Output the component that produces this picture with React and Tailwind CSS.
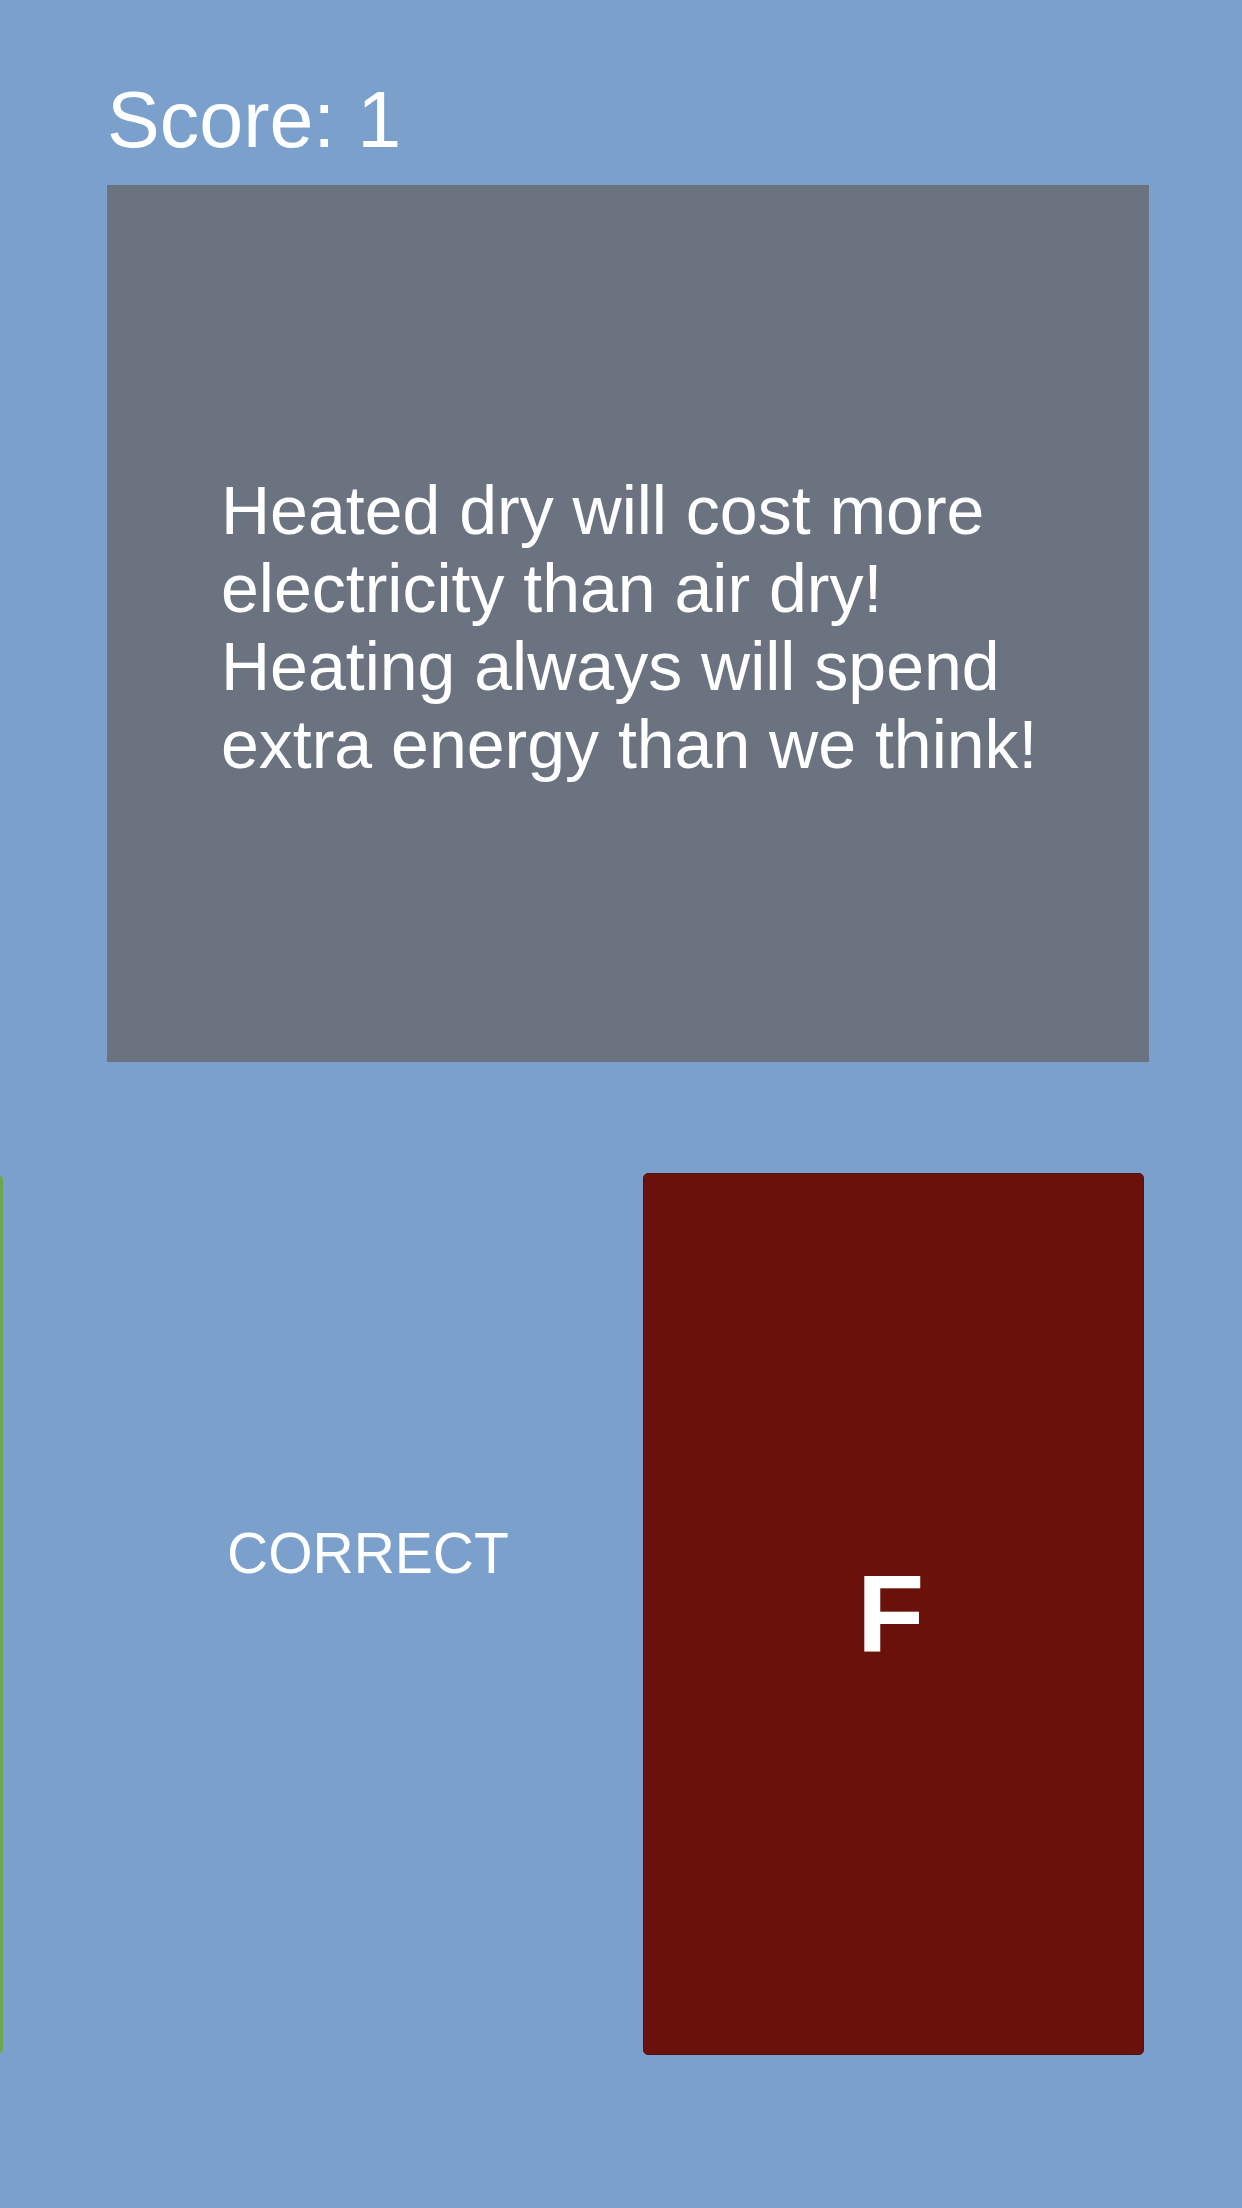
import React from 'react';

function Card({ className, children }) {
  return (
    <div className={`shrink-0 w-[501px] rounded-[5px] flex items-center justify-center ${className}`}>
      {children}
    </div>
  );
}

export default function App() {
  const score = 1;

  return (
    <div className="w-[1242px] h-[2208px] overflow-hidden bg-[#7ba0cc] text-white font-['Liberation_Sans',Arial,sans-serif]">
      <div className="pt-[80px] pl-[107px] text-[79px] leading-none">Score: {score}</div>

      <div className="ml-[107px] mt-[26px] w-[1042px] h-[877px] bg-[#6b7280] flex items-center pl-[114px]">
        <p className="text-[68px] leading-[78px] mb-[-6px]">
          Heated dry will cost more
          <br />
          electricity than air dry!
          <br />
          Heating always will spend
          <br />
          extra energy than we think!
        </p>
      </div>

      <div className="mt-[111px] h-[882px] flex items-start">
        <Card className="-ml-[498px] mt-[2px] h-[879px] bg-[#6aa84f]" />
        <div className="ml-[224px] mt-[352px] text-[57px] leading-none">CORRECT</div>
        <Card className="ml-auto mr-[98px] h-[882px] bg-[#6a110b] border border-[#4e1410]">
          <span className="text-[110px] leading-none font-bold mr-[6px]">F</span>
        </Card>
      </div>
    </div>
  );
}
